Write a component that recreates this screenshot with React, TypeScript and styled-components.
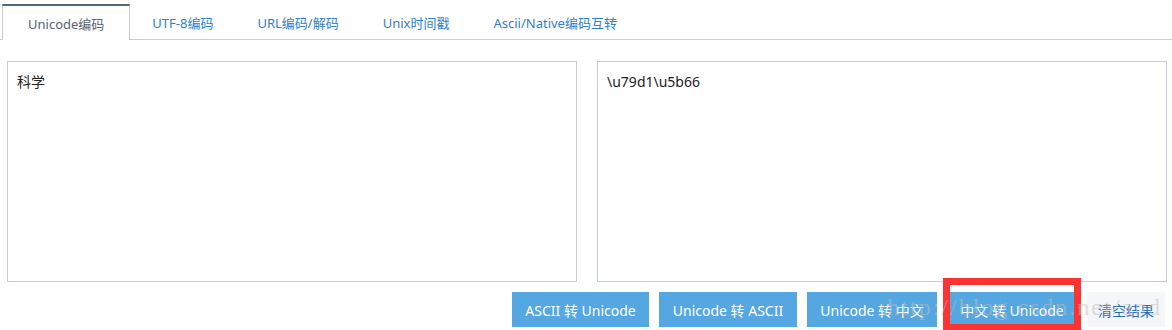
import React from "react";
import styled, { createGlobalStyle } from "styled-components";

const Global = createGlobalStyle`
  html, body { margin: 0; padding: 0; background: #ffffff; }
  body { font-family: "Noto Sans", "Noto Sans CJK SC", sans-serif; }
`;

const Page = styled.div`
  width: 1172px;
  height: 330px;
  overflow: hidden;
  position: relative;
  background: #fff;
`;

const TabBar = styled.div`
  display: flex;
  align-items: flex-end;
  padding: 4px 0 0 2px;
  height: 35px;
  border-bottom: 1px solid #c6cdd8;
`;

const Tab = styled.div<{ $active?: boolean; $pad: number }>`
  box-sizing: border-box;
  height: ${(p) => (p.$active ? 36 : 35)}px;
  margin-bottom: ${(p) => (p.$active ? -1 : 0)}px;
  padding: 0 ${(p) => p.$pad}px;
  display: flex;
  align-items: center;
  font-size: 13px;
  color: ${(p) => (p.$active ? "#58626f" : "#2f7fcf")};
  background: #fff;
  border-top: 2px solid ${(p) => (p.$active ? "#566479" : "transparent")};
  border-left: 1px solid ${(p) => (p.$active ? "#c6cdd8" : "transparent")};
  border-right: 1px solid ${(p) => (p.$active ? "#c6cdd8" : "transparent")};
  white-space: nowrap;
`;

const Content = styled.div`
  padding: 21px 5px 0 7px;
`;

const Editors = styled.div`
  display: grid;
  grid-template-columns: 570px 570px;
  column-gap: 20px;
`;

const Editor = styled.div`
  box-sizing: border-box;
  height: 221px;
  border: 1px solid #c6cdd8;
  padding: 10px 9px;
  font-size: 14px;
  line-height: 20px;
  color: #222;
  font-family: "Noto Sans", "Noto Sans CJK SC", sans-serif;
`;

const Actions = styled.div`
  display: flex;
  justify-content: flex-end;
  gap: 10px;
  margin-top: 10px;
  padding-right: 2px;
`;

const Button = styled.div<{ $light?: boolean; $w: number }>`
  box-sizing: border-box;
  width: ${(p) => p.$w}px;
  height: 35px;
  display: flex;
  align-items: center;
  justify-content: center;
  font-size: 14px;
  white-space: nowrap;
  background: ${(p) => (p.$light ? "#f4f6f9" : "#55a7e2")};
  color: ${(p) => (p.$light ? "#2b6db3" : "#ffffff")};
`;

const Highlight = styled.div`
  position: relative;
  display: flex;
  &::after {
    content: "";
    position: absolute;
    left: -4px;
    right: -4px;
    top: -14px;
    bottom: -4px;
    border: 7px solid #fb3333;
    pointer-events: none;
  }
`;

const Watermark = styled.div`
  position: absolute;
  right: 10px;
  top: 294px;
  font-family: "Liberation Serif", serif;
  font-size: 24px;
  letter-spacing: 2px;
  color: rgba(190, 190, 190, 0.5);
  pointer-events: none;
  white-space: nowrap;
`;

export default function App() {
  return (
    <Page>
      <Global />
      <TabBar>
        <Tab $active $pad={25}>Unicode编码</Tab>
        <Tab $pad={21}>UTF-8编码</Tab>
        <Tab $pad={21}>URL编码/解码</Tab>
        <Tab $pad={21}>Unix时间戳</Tab>
        <Tab $pad={21}>Ascii/Native编码互转</Tab>
      </TabBar>
      <Content>
        <Editors>
          <Editor>科学</Editor>
          <Editor>\u79d1\u5b66</Editor>
        </Editors>
        <Actions>
          <Button $w={137}>ASCII 转 Unicode</Button>
          <Button $w={138}>Unicode 转 ASCII</Button>
          <Button $w={130}>Unicode 转 中文</Button>
          <Highlight>
            <Button $w={130}>中文 转 Unicode</Button>
          </Highlight>
          <Button $light $w={78}>清空结果</Button>
        </Actions>
      </Content>
      <Watermark>http://blog.csdn.net/and</Watermark>
    </Page>
  );
}
